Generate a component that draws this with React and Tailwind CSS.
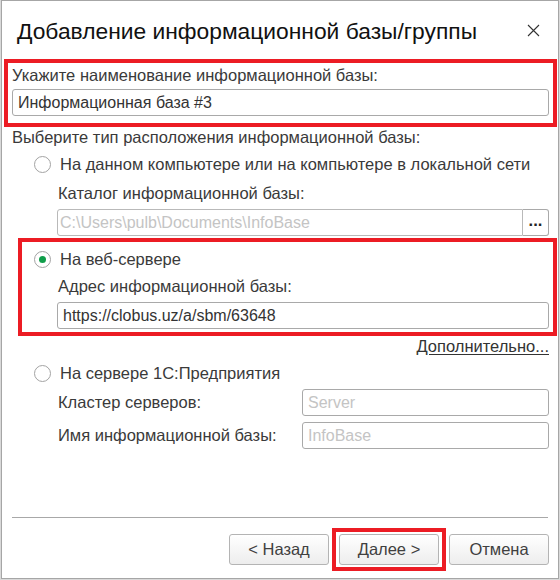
import React from "react";

function Radio({ checked }) {
  return (
    <span className="flex h-[17px] w-[17px] shrink-0 items-center justify-center rounded-full border border-[#a3a3a3] bg-white">
      {checked && <span className="h-[7px] w-[7px] rounded-full bg-[#0f9d4a]" />}
    </span>
  );
}

function Field({ value, placeholder, className = "" }) {
  return (
    <div
      className={`flex h-[27px] items-center rounded-[3px] border border-[#a9a9a9] bg-white px-[5px] ${className}`}
    >
      {value ? (
        <span className="text-[16px] text-[#333]">{value}</span>
      ) : (
        <span className="text-[16px] text-[#c4c4c4]">{placeholder}</span>
      )}
    </div>
  );
}

function Button({ children }) {
  return (
    <button className="flex h-[31px] w-[100px] items-center justify-center rounded-[3px] border border-[#b4b4b4] bg-gradient-to-b from-white to-[#ededed] text-[16.5px] text-[#404040]">
      {children}
    </button>
  );
}

export default function App() {
  return (
    <div
      className="h-[580px] w-[560px] overflow-hidden bg-[#d9d9d9] text-[16.5px] text-[#3a3a3a]"
      style={{ fontFamily: '"Liberation Sans", Arial, sans-serif' }}
    >
      <div className="ml-px flex h-[579px] w-[558px] flex-col border border-[#a6a6a6] bg-white">
        {/* title bar */}
        <div className="flex h-[58px] shrink-0 items-center justify-between pl-[15px] pr-[18px] pt-[3px]">
          <span className="text-[22.8px] text-[#111]">Добавление информационной базы/группы</span>
          <svg width="13" height="13" viewBox="0 0 13 13" className="mb-[2px]">
            <path d="M1 1 L12 12 M12 1 L1 12" stroke="#333" strokeWidth="1.1" />
          </svg>
        </div>

        {/* name */}
        <div className="ml-[2px] mr-px border-4 border-[#ec1c24] px-[4px] pb-[7px] pt-[2px]">
          <div className="flex h-[20px] items-center">Укажите наименование информационной базы:</div>
          <Field className="mt-[4px]" value="Информационная база #3" />
        </div>

        <div className="flex h-[20px] items-center pl-[10px]">
          Выберите тип расположения информационной базы:
        </div>

        {/* local */}
        <div className="ml-[16px] mr-[9px] pl-[16px]">
          <div className="mt-[5px] flex h-[24px] items-center gap-[9px]">
            <Radio />
            <span>На данном компьютере или на компьютере в локальной сети</span>
          </div>
          <div className="ml-[23px]">
            <div className="mt-[7px] flex h-[20px] items-center pl-px">Каталог информационной базы:</div>
            <div className="mt-[6px] flex h-[27px]">
              <div className="flex flex-1 items-center rounded-l-[3px] border border-[#b9b9b9] px-[2px] text-[16px] text-[#c4c4c4]">
                C:\Users\pulb\Documents\InfoBase
              </div>
              <div className="flex w-[26px] items-center justify-center rounded-r-[3px] border border-l-0 border-[#a9a9a9] pb-[4px] font-bold text-[#222]">
                ...
              </div>
            </div>
          </div>
        </div>

        {/* web server */}
        <div className="ml-[16px] mr-px mt-[2px] border-4 border-[#ec1c24] pb-[3px] pl-[12px] pr-[4px] pt-[5px]">
          <div className="flex h-[24px] items-center gap-[9px]">
            <Radio checked />
            <span>На веб-сервере</span>
          </div>
          <div className="ml-[23px]">
            <div className="mt-[5px] flex h-[20px] items-center pl-px">Адрес информационной базы:</div>
            <Field className="mt-[6px] px-[3px]" value="https://clobus.uz/a/sbm/63648" />
          </div>
        </div>

        <div className="flex h-[20px] items-center justify-end pr-[9px]">
          <span className="text-[#333] underline underline-offset-2">Дополнительно...</span>
        </div>

        {/* 1C server */}
        <div className="ml-[16px] mr-[9px] pl-[16px]">
          <div className="mt-[5px] flex h-[24px] items-center gap-[9px]">
            <Radio />
            <span>На сервере 1С:Предприятия</span>
          </div>
          <div className="ml-[23px]">
            <div className="mt-[4px] flex h-[27px] items-center">
              <span className="w-[245px] pl-px">Кластер серверов:</span>
              <Field className="flex-1 px-[3px]" placeholder="Server" />
            </div>
            <div className="mt-[6px] flex h-[27px] items-center">
              <span className="w-[245px] pl-px">Имя информационной базы:</span>
              <Field className="flex-1 px-[3px]" placeholder="InfoBase" />
            </div>
          </div>
        </div>

        <div className="flex-1" />

        <div className="mx-[10px] h-px shrink-0 bg-[#a8a8a8]" />

        <div className="mb-[7px] mt-[10px] flex h-[43px] shrink-0 items-center justify-end pr-[9px]">
          <Button>&lt; Назад</Button>
          <div className="ml-[3px] flex h-[43px] items-center border-4 border-[#ec1c24] px-[3px]">
            <Button>Далее &gt;</Button>
          </div>
          <div className="ml-[3px]">
            <Button>Отмена</Button>
          </div>
        </div>
      </div>
    </div>
  );
}
